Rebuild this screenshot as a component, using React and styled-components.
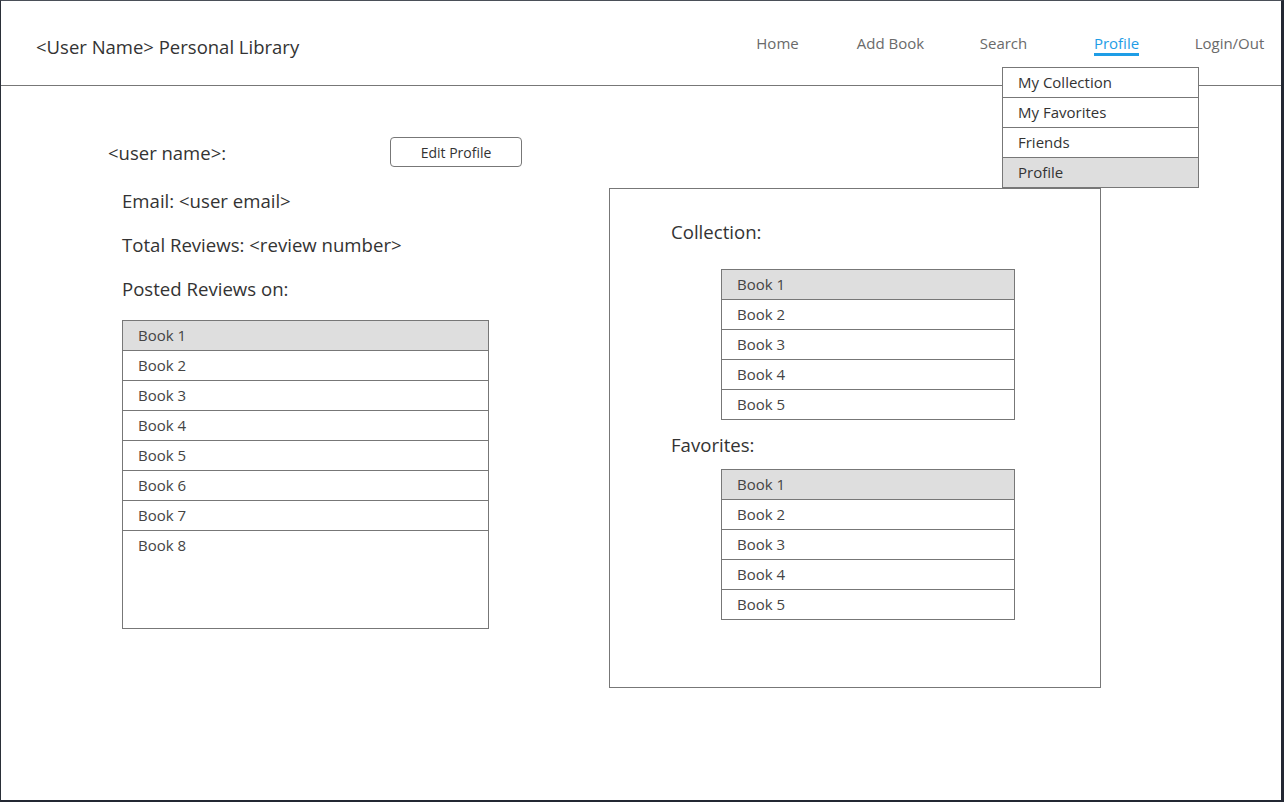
import React from 'react'
import styled, { createGlobalStyle } from 'styled-components'

const GlobalStyle = createGlobalStyle`
html, body {
    margin: 0;
    padding: 0;
    background: #fff;
}
body {
    font-family: "Open Sans", "Noto Sans", "Liberation Sans", sans-serif;
    color: #333;
}
`

const Frame = styled.div`
position: relative;
width: 1284px;
height: 802px;
box-sizing: border-box;
border-top: 1px solid #4a4f58;
border-left: 1px solid #2a2f38;
border-right: 3px solid #232833;
border-bottom: 2px solid #232833;
overflow: hidden;
`

const Header = styled.header`
height: 84px;
border-bottom: 1px solid #777;
display: flex;
align-items: center;
padding-left: 35px;
`

const Title = styled.h1`
margin: 6px 0 0 0;
font-size: 18.5px;
font-weight: 400;
color: #333;
flex: 1;
`

const Nav = styled.nav`
display: flex;
margin-right: -5px;
margin-top: 2px;
`

const NavItem = styled.div`
width: 113px;
display: flex;
justify-content: center;
`

const NavLink = styled.span`
font-size: 15px;
line-height: 20px;
color: ${p => p.$active ? '#1e9de6' : '#6a6a6a'};
border-bottom: 3px solid ${p => p.$active ? '#1e9de6' : 'transparent'};
`

const Dropdown = styled.ul`
position: absolute;
left: 1001px;
top: 66px;
width: 195px;
margin: 0;
padding: 0;
list-style: none;
border: 1px solid #777;
background: #fff;
z-index: 2;
`

const DropItem = styled.li`
height: 29px;
line-height: 29px;
padding-left: 15px;
font-size: 15px;
color: #333;
background: ${p => p.$selected ? '#dedede' : '#fff'};
& + & {
    border-top: 1px solid #777;
}
`

const Main = styled.main`
display: flex;
padding-left: 107px;
`

const LeftColumn = styled.section`
width: 501px;
padding-top: 51px;
`

const ProfileHead = styled.div`
display: flex;
align-items: center;
height: 30px;
`

const UserName = styled.div`
width: 282px;
font-size: 18.5px;
color: #333;
`

const EditButton = styled.button`
width: 132px;
height: 30px;
border: 1px solid #777;
border-radius: 4px;
background: #fff;
font-family: inherit;
font-size: 14px;
color: #333;
padding: 0;
`

const Details = styled.div`
padding-left: 14px;
margin-top: 12px;
`

const InfoLine = styled.div`
font-size: 18.6px;
line-height: 44px;
color: #333;
`

const BookList = styled.ul`
margin: ${p => p.$mt || 0}px 0 0 ${p => p.$ml || 0}px;
padding: 0;
list-style: none;
width: ${p => p.$width}px;
height: ${p => p.$height ? `${p.$height}px` : 'auto'};
box-sizing: border-box;
border: 1px solid #777;
display: flex;
flex-direction: column;
`

const BookRow = styled.li`
height: 29px;
flex: ${p => p.$fill ? 1 : 'none'};
line-height: 29px;
padding-left: 15px;
font-size: 15px;
color: #444;
background: ${p => p.$selected ? '#dedede' : '#fff'};
& + & {
    border-top: 1px solid #777;
}
`

const Panel = styled.section`
margin-top: 102px;
width: 492px;
height: 500px;
box-sizing: border-box;
border: 1px solid #777;
padding: 26px 0 0 61px;
`

const PanelLabel = styled.div`
font-size: 18.6px;
line-height: 34px;
color: #333;
margin-top: ${p => p.$mt || 0}px;
`

const navItems = ['Home', 'Add Book', 'Search', 'Profile', 'Login/Out']
const menuItems = ['My Collection', 'My Favorites', 'Friends', 'Profile']
const reviewed = ['Book 1', 'Book 2', 'Book 3', 'Book 4', 'Book 5', 'Book 6', 'Book 7', 'Book 8']
const five = ['Book 1', 'Book 2', 'Book 3', 'Book 4', 'Book 5']

export default function App() {
    return (
        <Frame>
            <GlobalStyle />
            <Header>
                <Title>&lt;User Name&gt; Personal Library</Title>
                <Nav>
                    {navItems.map(item => (
                        <NavItem key={item}>
                            <NavLink $active={item === 'Profile'}>{item}</NavLink>
                        </NavItem>
                    ))}
                </Nav>
            </Header>
            <Dropdown>
                {menuItems.map(item => (
                    <DropItem key={item} $selected={item === 'Profile'}>{item}</DropItem>
                ))}
            </Dropdown>
            <Main>
                <LeftColumn>
                    <ProfileHead>
                        <UserName>&lt;user name&gt;:</UserName>
                        <EditButton>Edit Profile</EditButton>
                    </ProfileHead>
                    <Details>
                        <InfoLine>Email: &lt;user email&gt;</InfoLine>
                        <InfoLine>Total Reviews: &lt;review number&gt;</InfoLine>
                        <InfoLine>Posted Reviews on:</InfoLine>
                        <BookList $mt={9} $width={367} $height={309}>
                            {reviewed.map((b, i) => (
                                <BookRow key={b} $selected={i === 0} $fill={i === reviewed.length - 1}>{b}</BookRow>
                            ))}
                        </BookList>
                    </Details>
                </LeftColumn>
                <Panel>
                    <PanelLabel>Collection:</PanelLabel>
                    <BookList $mt={20} $ml={50} $width={294}>
                        {five.map((b, i) => (
                            <BookRow key={b} $selected={i === 0}>{b}</BookRow>
                        ))}
                    </BookList>
                    <PanelLabel $mt={8}>Favorites:</PanelLabel>
                    <BookList $mt={7} $ml={50} $width={294}>
                        {five.map((b, i) => (
                            <BookRow key={b} $selected={i === 0}>{b}</BookRow>
                        ))}
                    </BookList>
                </Panel>
            </Main>
        </Frame>
    )
}
